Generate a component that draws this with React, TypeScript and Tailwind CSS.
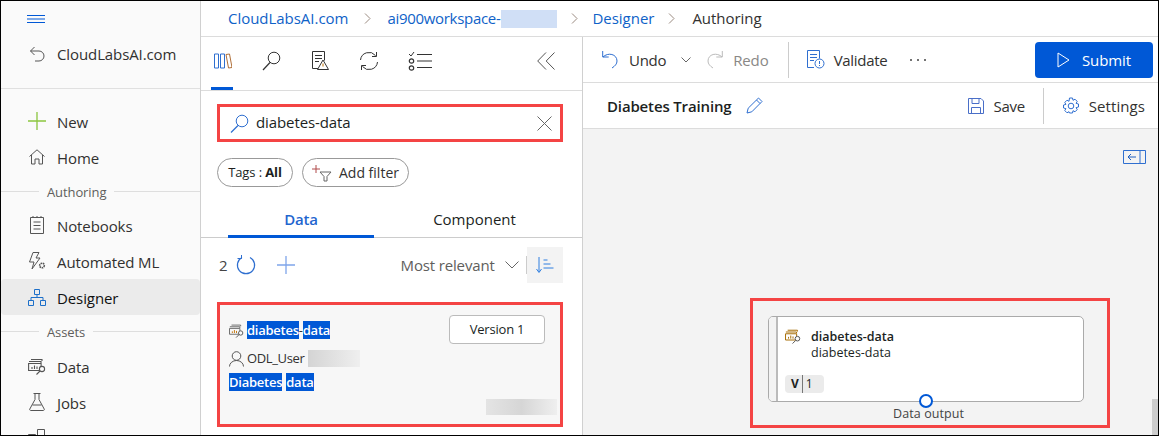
import React from "react";

const font = { fontFamily: '"Open Sans","Noto Sans",sans-serif' };

type SP = { className?: string; children: React.ReactNode; w: number; h: number };
const I = ({ className, children, w, h }: SP) => (
  <svg width={w} height={h} viewBox={`0 0 ${w} ${h}`} fill="none" strokeWidth={1} className={`shrink-0 ${className ?? ""}`}>
    {children}
  </svg>
);

const DataIcon = ({ stroke = "#555", accent = "#555", size = 18 }: { stroke?: string; accent?: string; size?: number }) => (
  <svg width={size} height={size} viewBox="0 0 18 18" fill="none" strokeWidth={1.1}>
    <path d="M3 2.500h11v1.500" stroke={stroke} />
    <path d="M1 4.500h12v1.500M.6 6.500h12.500v7H.6z" stroke={stroke} />
    <path d="M4 12V10M6.500 12V8.500M9 12V9.500" stroke={accent} />
    <circle cx="14" cy="12" r="2.600" stroke="#555" fill="#fafafa" />
    <path d="M12 14l-3.500 3.500" stroke="#555" />
  </svg>
);

function NavRow({ icon, label, active }: { icon: React.ReactNode; label: string; active?: boolean }) {
  return (
    <div className={`flex h-9 shrink-0 items-center rounded-sm pl-[26px] ${active ? "bg-[#ebebeb] text-[#111]" : "text-[#323130]"}`}>
      <span className="flex w-[20px] justify-center">{icon}</span>
      <span className="ml-[10px] pt-[2px] text-[15px] leading-none tracking-[-0.1px]">{label}</span>
    </div>
  );
}

function SectionLabel({ label, h }: { label: string; h: string }) {
  return (
    <div className={`flex shrink-0 items-center ${h}`}>
      <span className="h-px w-[38px] bg-[#dedede]" />
      <span className="px-[8px] pt-[2px] text-[13px] leading-none tracking-[-0.1px] text-[#605e5c]">{label}</span>
      <span className="h-px flex-1 bg-[#dedede]" />
    </div>
  );
}

function Sidebar() {
  const g = "#555";
  return (
    <aside className="flex h-full w-[200px] shrink-0 flex-col overflow-hidden border-r border-[#d0d0d0] bg-[#fafafa]">
      <div className="flex h-[35px] shrink-0 items-center pl-[26px] pt-[2px]">
        <I w={18} h={9}>
          <path d="M0 .5h18M0 4h18M0 7.500h18" stroke="#0058d6" />
        </I>
      </div>
      <div className="flex h-[53px] shrink-0 items-start border-b border-[#e0e0e0] pl-[26px]">
        <span className="flex h-9 w-[20px] items-center justify-center">
          <I w={16} h={16}>
            <path d="M5.500 1L1.500 5l4 4M1.500 5H10a5 5 0 0 1 0 10H6" stroke={g} />
          </I>
        </span>
        <span className="ml-[10px] flex h-9 items-center text-[15px] tracking-[-0.1px] text-[#323130]">CloudLabsAI.com</span>
      </div>
      <div className="h-[14px] shrink-0" />
      <NavRow label="New" icon={<I w={18} h={18}><path d="M9 0v18M0 9h18" stroke="#8cc63f" strokeWidth={1.3} /></I>} />
      <NavRow label="Home" icon={<I w={16} h={16}><path d="M.5 7.500L8 .8l7.500 6.700M2.500 6v9h3.500v-5h4v5h3.500V6" stroke={g} /></I>} />
      <SectionLabel label="Authoring" h="h-[32px]" />
      <NavRow label="Notebooks" icon={<I w={14} h={18}><path d="M.5 1.500h13v16H.5zM3 1v-1M7 1v-1M11 1v-1M3.500 6h7M3.500 9.500h7M3.500 13h7" stroke={g} /></I>} />
      <NavRow label="Automated ML" icon={<I w={18} h={18}><path d="M5 .5h6L8 6h4l-8 11 2-7H1.500z" stroke={g} /><circle cx="14" cy="13.500" r="2.300" stroke={g} strokeWidth={1.6} strokeDasharray="1.5 .6" fill="#fafafa" /></I>} />
      <NavRow active label="Designer" icon={<I w={18} h={17}><path d="M6.500.5h5v5h-5zM.5 11.500h5v5h-5zM12.500 11.500h5v5h-5zM9 5.500v3M3 11.500v-3h12v3" stroke="#1c6fc9" /></I>} />
      <SectionLabel label="Assets" h="h-[33px]" />
      <NavRow label="Data" icon={<DataIcon />} />
      <NavRow label="Jobs" icon={<I w={16} h={18}><path d="M4.500.5h7M6 .5v6L.8 16a1 1 0 0 0 1 1.500h12.400a1 1 0 0 0 1-1.500L10 6.500V.5M3.500 12h9" stroke={g} /></I>} />
      <NavRow label="Components" icon={<I w={18} h={18}><path d="M.5 5.500h7v7h-7zM9.500.5h7v7h-7zM9.500 9.500h7v7h-7z" stroke={g} /></I>} />
    </aside>
  );
}

function Crumb({ children, dark, tight }: { children: React.ReactNode; dark?: boolean; tight?: boolean }) {
  return <span className={`text-[15px] leading-none ${tight ? "tracking-[-0.3px]" : "tracking-[-0.03px]"} ${dark ? "text-[#323130]" : "text-[#0f62c8]"}`}>{children}</span>;
}
const CrumbSep = ({ className }: { className: string }) => (
  <I w={7} h={11} className={className}>
    <path d="M1 .5L6 5.500 1 10.500" stroke="#9a8a80" />
  </I>
);

function Breadcrumb() {
  return (
    <div className="flex h-[36px] shrink-0 items-center border-b border-[#dcdcdc] pl-[27px]">
      <Crumb>CloudLabsAI.com</Crumb>
      <CrumbSep className="ml-[16px] mr-[16px]" />
      <Crumb tight>ai900workspace-</Crumb>
      <span className="h-[18px] w-[56px] bg-[#d0dff6]" />
      <CrumbSep className="ml-[14px] mr-[15px]" />
      <Crumb>Designer</Crumb>
      <CrumbSep className="ml-[14px] mr-[17px]" />
      <Crumb dark>Authoring</Crumb>
    </div>
  );
}

function Highlight({ children, bold = true }: { children: React.ReactNode; bold?: boolean }) {
  return <span className={`bg-[#0058d6] text-white ${bold ? "font-semibold" : ""}`}>{children}</span>;
}

function Panel() {
  const k = "#333";
  return (
    <section className="flex h-full w-[382px] shrink-0 flex-col overflow-hidden border-r border-[#d0d0d0] bg-white">
      <div className="relative flex h-[54px] shrink-0 items-center border-b border-[#dcdcdc] pb-[6px]">
        <span className="ml-[13px]">
          <I w={18} h={16}>
            <path d="M.5 1h4v14h-4zM6.500 1h4v14h-4z" stroke="#2f6fd0" />
            <path d="M12 1.500l3.500-.5 2.500 13.500-3.500.5z" stroke="#b0703a" />
          </I>
        </span>
        <span className="ml-[30px]">
          <I w={19} h={20}>
            <circle cx="12" cy="7" r="5.800" stroke={k} />
            <path d="M8 11.500L1 19" stroke={k} strokeWidth={1.2} />
          </I>
        </span>
        <span className="ml-[31px]">
          <I w={17} h={19}>
            <path d="M6 17.500H.5V.5h12v9M3 4.500h7M3 7.500h7M3 10.500h4" stroke={k} />
            <path d="M11 9l5.500 9.500h-11z" stroke="#333" fill="#fff" />
            <path d="M11 12.500v3" stroke="#c07000" />
          </I>
        </span>
        <span className="ml-[30px]">
          <I w={20} h={20}>
            <path d="M1.500 9a8.500 8.500 0 0 1 15-4.500M18.500 11a8.500 8.500 0 0 1-15 4.500" stroke={k} />
            <path d="M17.500 1v4.500H13M2.500 19v-4.500H7" stroke={k} />
          </I>
        </span>
        <span className="ml-[29px]">
          <I w={24} h={20}>
            <path d="M1 3l2 2 3-4" stroke={k} />
            <circle cx="3.500" cy="10" r="2.200" stroke={k} strokeWidth={1.2} />
            <circle cx="3.500" cy="17" r="2.200" stroke={k} strokeWidth={1.2} />
            <path d="M9 3.500h15M9 10h15M9 16.500h15" stroke={k} strokeWidth={1.2} />
          </I>
        </span>
        <span className="ml-auto mr-[27px]">
          <I w={18} h={18}>
            <path d="M9 .5L.7 9 9 17.500M17.500.5L9.200 9l8.300 8.500" stroke="#555" />
          </I>
        </span>
        <span className="absolute bottom-0 left-[10px] h-[3px] w-[22px] bg-[#0058d6]" />
      </div>

      <div className="ml-[16px] mt-[13px] flex h-[38px] w-[346px] shrink-0 items-center border-[3px] border-[#f44444] pl-[10px]">
        <I w={19} h={19}>
          <circle cx="12" cy="7" r="5.800" stroke="#2f6fd0" />
          <path d="M8 11.500L1 18.500" stroke="#2f6fd0" strokeWidth={1.2} />
        </I>
        <span className="ml-[7px] pb-[2px] text-[15px] leading-none tracking-[-0.1px] text-[#201f1e]">diabetes-data</span>
        <span className="ml-auto mr-[8px]">
          <I w={15} h={15}>
            <path d="M.5.5l14 14M14.500.5l-14 14" stroke="#666" />
          </I>
        </span>
      </div>

      <div className="ml-[16px] mt-[16px] flex shrink-0 gap-[9px]">
        <span className="flex h-[29px] w-[76px] items-center justify-center rounded-full border border-[#999] text-[13px] leading-none tracking-[-0.1px] text-[#201f1e]">
          Tags :&nbsp;<b>All</b>
        </span>
        <span className="flex h-[29px] w-[107px] items-center rounded-full border border-[#999] pl-[9px] text-[14px] leading-none text-[#323130]">
          <I w={20} h={18}>
            <path d="M4 1v8M0 5h8" stroke="#b04a4a" />
            <path d="M8 8h11l-4 4.500V17h-3v-4.500z" stroke="#666" />
          </I>
          <span className="ml-[7px]">Add filter</span>
        </span>
      </div>

      <div className="mt-[19px] flex h-[32px] shrink-0 border-b border-[#ccc] pl-[27px] pr-[26px] text-[15px] leading-none">
        <div className="relative flex w-[146px] items-start justify-center pt-[6px] font-semibold tracking-[-0.2px] text-[#1f66cf]">
          Data
          <span className="absolute -bottom-px left-0 h-[3px] w-full bg-[#0058d6]" />
        </div>
        <div className="flex flex-1 items-start justify-center pl-[19px] pt-[6px] text-[#201f1e]">Component</div>
      </div>

      <div className="mt-[9px] flex h-9 shrink-0 items-center pl-[18px]">
        <span className="text-[15px] leading-none text-[#444]">2</span>
        <span className="ml-[8px]">
          <I w={20} h={20}>
            <path d="M6 2.500a8.600 8.600 0 1 0 8 0" stroke="#2f6fd0" strokeWidth={1.2} />
            <path d="M5.500 0v3.500H1.500" stroke="#2f6fd0" />
          </I>
        </span>
        <span className="ml-[21px]">
          <I w={18} h={18}>
            <path d="M9 0v18M0 9h18" stroke="#7fa5ea" strokeWidth={1.3} />
          </I>
        </span>
        <span className="ml-[106px] text-[15px] leading-none tracking-[-0.15px] text-[#605e5c]">Most relevant</span>
        <span className="ml-[10px]">
          <I w={14} h={8}>
            <path d="M.5.5L7 7l6.500-6.500" stroke="#666" />
          </I>
        </span>
        <span className="ml-[7px] h-[18px] w-px bg-[#ccc]" />
        <span className="flex h-9 w-9 items-center justify-center bg-[#f3f3f3]">
          <I w={18} h={18}>
            <path d="M3 1v15M.5 13l2.500 3.500L5.500 13M7.500 4h4M7.500 8h7M7.500 12h10" stroke="#2f7fe0" />
          </I>
        </span>
      </div>

      <div className="relative ml-[16px] mt-[19px] h-[125px] w-[346px] shrink-0 border-[3px] border-[#f44444] bg-[#f7f7f7]">
        <div className="flex items-start justify-between pl-[9px] pr-[15px] pt-[10px]">
          <div className="mt-[6px] flex items-center">
            <DataIcon size={15} stroke="#666" accent="#c07000" />
            <span className="ml-[3px] flex gap-0 text-[13px] leading-[18px] tracking-[-0.25px]">
              <Highlight>diabetes</Highlight><span className="text-[#333]">-</span><Highlight>data</Highlight>
            </span>
          </div>
          <span className="flex h-[29px] w-[96px] items-center justify-center rounded-sm border border-[#bbb] bg-white text-[13px] leading-none tracking-[-0.2px] text-[#201f1e]">Version 1</span>
        </div>
        <div className="mt-[6px] flex items-center pl-[9px]">
          <I w={15} h={16}>
            <circle cx="7.500" cy="5" r="4.300" stroke="#555" />
            <path d="M.5 15.500a7 6 0 0 1 14 0" stroke="#555" />
          </I>
          <span className="ml-[3px] text-[13px] leading-none tracking-[-0.35px] text-[#323130]">ODL_User</span>
          <span className="ml-[3px] h-[17px] w-[52px] bg-gradient-to-r from-[#d4d4d4] to-[#efefef]" />
        </div>
        <div className="mt-[6px] flex gap-[4px] pl-[9px] text-[13px] leading-[18px] tracking-[-0.25px]">
          <Highlight>Diabetes</Highlight>
          <Highlight>data</Highlight>
        </div>
        <span className="absolute bottom-[9px] right-[3px] h-[16px] w-[71px] bg-gradient-to-r from-[#e4e4e4] via-[#d6d6d6] to-[#efefef]" />
      </div>
    </section>
  );
}

function Toolbar() {
  return (
    <div className="flex h-[46px] shrink-0 items-center border-b border-[#dcdcdc] pl-[19px] text-[15px] leading-none tracking-[-0.3px]">
      <I w={16} h={19}>
        <path d="M.7 1v6h6M1 7c5-5 14-3 14 4 0 3-2 5-5 7" stroke="#2f6fd0" />
      </I>
      <span className="ml-[11px] pt-[1px] text-[#323130]">Undo</span>
      <span className="ml-[15px]">
        <I w={10} h={6}><path d="M.5.5L5 5 9.500.5" stroke="#666" /></I>
      </span>
      <span className="ml-[16px]">
        <I w={16} h={19}><path d="M15.300 1v6h-6M15 7C10 2 1 4 1 11c0 3 2 5 5 7" stroke="#bbb" /></I>
      </span>
      <span className="ml-[10px] pt-[1px] tracking-[-0.1px] text-[#8a8886]">Redo</span>
      <span className="ml-[19px] h-[36px] w-px bg-[#ccc]" />
      <span className="ml-[18px]">
        <I w={18} h={19}>
          <path d="M7 17.500H.5V.5h12v8M3 4.500h7M3 7.500h7M3 10.500h4" stroke="#2f6fd0" />
          <circle cx="12.500" cy="13.500" r="4.500" stroke="#2f6fd0" fill="#fff" />
          <path d="M12.500 11v3M12.500 15v1" stroke="#2f6fd0" />
        </I>
      </span>
      <span className="ml-[9px] pt-[1px] text-[#323130]">Validate</span>
      <span className="ml-[23px] flex gap-[5px]">
        <span className="h-[2px] w-[2px] rounded-full bg-[#444]" />
        <span className="h-[2px] w-[2px] rounded-full bg-[#444]" />
        <span className="h-[2px] w-[2px] rounded-full bg-[#444]" />
      </span>
      <button className="ml-auto mr-[5px] flex h-[36px] w-[118px] items-center justify-center rounded-sm bg-[#0058d6] tracking-[-0.1px] text-white">
        <I w={13} h={16}><path d="M1 1l11 7-11 7z" stroke="#fff" /></I>
        <span className="ml-[12px] pt-[1px]">Submit</span>
      </button>
    </div>
  );
}

function TitleBar() {
  return (
    <div className="flex h-[46px] shrink-0 items-center border-b border-[#dcdcdc] pl-[24px] text-[15px] leading-none tracking-[-0.3px]">
      <span className="pt-[1px] font-semibold tracking-[-0.15px] text-[#201f1e]">Diabetes Training</span>
      <span className="ml-[15px]">
        <I w={17} h={17}><path d="M1 16l1.200-4.800L12.500 1l3.500 3.500L5.800 14.800zM10.500 3l3.500 3.500" stroke="#2f6fd0" /></I>
      </span>
      <span className="ml-auto">
        <I w={16} h={16}><path d="M.5.5h12.500l2.500 2.500v12.500H.5zM4 .5v5h7v-5M3.500 15.500V9.500h9v6" stroke="#4a6fc8" /></I>
      </span>
      <span className="ml-[10px] pt-[1px] text-[#323130]">Save</span>
      <span className="ml-[18px] h-[36px] w-px bg-[#ccc]" />
      <span className="ml-[18px]">
        <I w={18} h={18}>
          <circle cx="9" cy="9" r="2.800" stroke="#2f6fd0" />
          <path d="M7.500 1h3l.5 2.300 2-1.100 2.200 2.200-1.100 2 2.400.6v3l-2.400.6 1.100 2-2.200 2.200-2-1.100-.5 2.300h-3L7 14.700l-2 1.100-2.200-2.200 1.100-2L1.500 11V8l2.400-.6-1.100-2L5 3.200l2 1.100z" stroke="#2f6fd0" />
        </I>
      </span>
      <span className="ml-[9px] mr-[13px] pt-[1px] tracking-[0.07px] text-[#323130]">Settings</span>
    </div>
  );
}

function Canvas() {
  return (
    <div className="relative flex-1 overflow-hidden bg-[#f3f3f3]">
      <span className="absolute left-[540px] top-[21px]">
        <I w={23} h={14}>
          <path d="M.5.5h22v13H.5zM17 .5v13" stroke="#2f6fd0" />
          <path d="M13 7H5M8 4L5 7l3 3" stroke="#1f5fc0" />
        </I>
      </span>
      <div className="absolute left-[167px] top-[169px] h-[130px] w-[360px] border-[3px] border-[#f44444]">
        <div className="absolute left-[15px] top-[15px] flex h-[86px] w-[316px] overflow-hidden rounded-[5px] border border-[#aaa] bg-white">
          <span className="w-[9px] shrink-0 border-r-2 border-[#bbb] bg-[#f3f3f3]" />
          <div className="flex flex-col pl-[7px] pt-[11px]">
            <div className="flex">
              <DataIcon size={16} stroke="#a66a00" accent="#a66a00" />
              <div className="ml-[10px] text-[12.5px] leading-[16px] text-[#201f1e]">
                <div className="mt-[1px] font-semibold">diabetes-data</div>
                <div>diabetes-data</div>
              </div>
            </div>
            <div className="mt-[14px] flex h-[18px] w-[39px] items-center rounded-[4px] bg-[#ebebeb] pl-[6px] text-[12px] leading-none text-[#201f1e]">
              <b>V</b>
              <span className="mx-[3px] h-[18px] w-px bg-[#777]" />
              <span>1</span>
            </div>
          </div>
        </div>
        <span className="absolute left-[166px] top-[93px] h-[14px] w-[14px] rounded-full border-2 border-[#0058d6] bg-white" />
        <span className="absolute left-[140px] top-[107px] text-[12.5px] leading-none tracking-[0.1px] text-[#444]">Data output</span>
      </div>
      <span className="absolute bottom-0 right-0 h-[36px] w-[6px] bg-[#cdcdcd]" />
    </div>
  );
}

export default function App() {
  return (
    <div style={font} className="box-border flex h-[436px] w-[1159px] overflow-hidden border border-black bg-white">
      <Sidebar />
      <main className="flex h-full min-w-0 flex-1 flex-col">
        <Breadcrumb />
        <div className="flex min-h-0 flex-1">
          <Panel />
          <div className="flex h-full min-w-0 flex-1 flex-col">
            <Toolbar />
            <TitleBar />
            <Canvas />
          </div>
        </div>
      </main>
    </div>
  );
}
